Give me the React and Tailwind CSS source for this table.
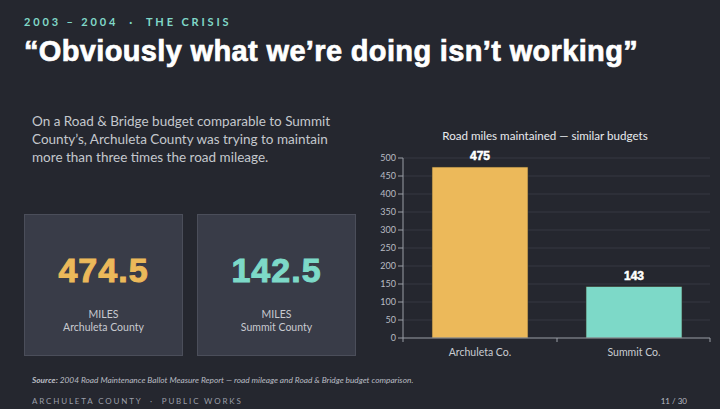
import React from "react";

const ticks = [0, 50, 100, 150, 200, 250, 300, 350, 400, 450, 500];
const yOf = (v) => 336 - v * 0.36;

const bars = [
  { label: "Archuleta Co.", value: 475, x: 432, color: "#ecb95a" },
  { label: "Summit Co.", value: 143, x: 586, color: "#7dd9c8" },
];

const stats = [
  { value: "474.5", county: "Archuleta County", color: "text-[#ecb95a]" },
  { value: "142.5", county: "Summit County", color: "text-[#7dd9c8]" },
];

// ---------------- CHART ----------------
const MilesChart = () => (
  <svg
    width="350"
    height="245"
    viewBox="365 110 350 245"
    className="shrink-0"
    style={{ fontFamily: "Lato, 'Liberation Sans', sans-serif" }}
  >
    <text x="545" y="138" textAnchor="middle" fontSize="11.6" fill="#e8eaee">
      Road miles maintained — similar budgets
    </text>

    {ticks.map((t) => (
      <g key={t}>
        {t > 0 && (
          <line x1="403" x2="710" y1={yOf(t)} y2={yOf(t)} stroke="#363943" strokeWidth="1" />
        )}
        <line x1="398" x2="403" y1={yOf(t)} y2={yOf(t)} stroke="#9a9ea6" strokeWidth="1" />
        <text x="396" y={yOf(t) + 3.2} textAnchor="end" fontSize="9" fill="#b9bcc3">
          {t}
        </text>
      </g>
    ))}

    {bars.map((b) => (
      <g key={b.label}>
        <rect
          x={b.x}
          y={yOf(b.value)}
          width="96"
          height={336 - yOf(b.value)}
          fill={b.color}
          stroke="#3a3528"
          strokeWidth="0.6"
        />
        <text
          x={b.x + 48}
          y={yOf(b.value) - 7}
          textAnchor="middle"
          fontSize="12"
          fontWeight="700"
          fill="#ffffff"
          stroke="#ffffff"
          strokeWidth="0.5"
          style={{ fontFamily: "'Liberation Sans', Arial, sans-serif" }}
        >
          {b.value}
        </text>
        <text x={b.x + 48} y="354" textAnchor="middle" fontSize="10.5" fill="#c9ccd2">
          {b.label}
        </text>
      </g>
    ))}

    {/* axes */}
    <line x1="403" x2="403" y1="156" y2="336" stroke="#9a9ea6" strokeWidth="1" />
    <line x1="403" x2="710" y1="336" y2="336" stroke="#9a9ea6" strokeWidth="1" />
    {[403, 557, 710].map((x) => (
      <line key={x} x1={x} x2={x} y1="336" y2="340" stroke="#9a9ea6" strokeWidth="1" />
    ))}
  </svg>
);

const App = () => {
  return (
    <div
      className="w-[720px] h-[409px] overflow-hidden bg-[#25272f] flex flex-col px-6 pt-4"
      style={{ fontFamily: "Lato, 'Liberation Sans', sans-serif" }}
    >
      {/* HEADER */}
      <div className="text-[11px] leading-none font-bold tracking-[0.26em] text-[#80d8c8] whitespace-nowrap">
        2003 – 2004 &nbsp;·&nbsp; THE CRISIS
      </div>
      <h1 className="mt-[10px] text-[29px] leading-none font-bold tracking-[0.35px] text-white whitespace-nowrap font-['Liberation_Sans',Arial,sans-serif] [-webkit-text-stroke:0.7px_white]">
        “Obviously what we’re doing isn’t working”
      </h1>

      {/* BODY */}
      <div className="mt-[46px] flex gap-[9px]">
        <div className="w-[332px] shrink-0 flex flex-col">
          <p className="pl-2 text-[13.5px] leading-[18px] text-[#c4c7cd] whitespace-nowrap">
            On a Road &amp; Bridge budget comparable to Summit
            <br />
            County’s, Archuleta County was trying to maintain
            <br />
            more than three times the road mileage.
          </p>

          <div className="mt-[48px] flex gap-[14px]">
            {stats.map((s) => (
              <div
                key={s.county}
                className="w-[159px] h-[142px] bg-[#393c48] border border-[#4b4e5a] flex flex-col items-center pt-[38px]"
              >
                <div
                  className={`text-[34px] leading-none font-bold tracking-[0.03em] font-['Liberation_Sans',Arial,sans-serif] [-webkit-text-stroke:1px_currentColor] ${s.color}`}
                >
                  {s.value}
                </div>
                <div className="mt-[21px] text-[10.5px] leading-[13px] text-[#c8cad0] text-center">
                  MILES
                  <br />
                  {s.county}
                </div>
              </div>
            ))}
          </div>
        </div>

        <MilesChart />
      </div>

      {/* SOURCE */}
      <p className="mt-[18px] pl-2 text-[8.3px] leading-[10px] italic text-[#b9bcc3] whitespace-nowrap">
        <span className="font-bold">Source:</span> 2004 Road Maintenance Ballot Measure Report — road
        mileage and Road &amp; Bridge budget comparison.
      </p>

      {/* FOOTER */}
      <div className="mt-[11px] pl-2 flex justify-between text-[8px] leading-[10px] text-[#9a9ea8]">
        <span className="tracking-[0.23em] whitespace-nowrap">ARCHULETA COUNTY &nbsp;·&nbsp; PUBLIC WORKS</span>
        <span className="pr-[9px] text-[#b9bcc3]">11 / 30</span>
      </div>
    </div>
  );
};

export default App;
